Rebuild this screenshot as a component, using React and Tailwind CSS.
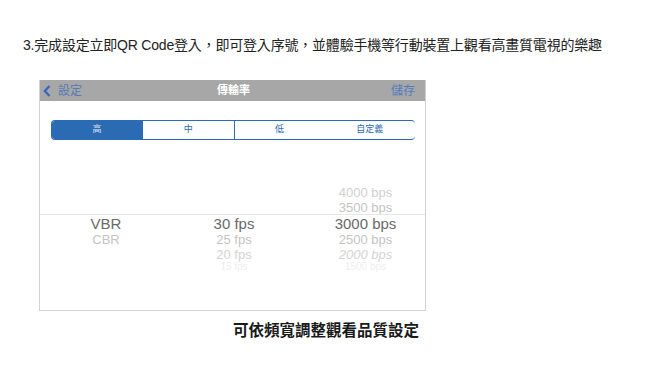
const font = { fontFamily: '"Liberation Sans", "Noto Sans CJK TC", sans-serif' };

const segments = ["高", "中", "低", "自定義"];

const pickerCols = [
  {
    x: "w-[132px] shrink-0",
    rows: [
      { t: "", c: "" },
      { t: "", c: "" },
      { t: "VBR", c: "text-[#6a6a6a] text-[15px]" },
      { t: "CBR", c: "text-[#c4c4c4] text-[13px]" },
      { t: "", c: "" },
      { t: "", c: "" },
    ],
  },
  {
    x: "w-[124px] shrink-0",
    rows: [
      { t: "", c: "" },
      { t: "", c: "" },
      { t: "30 fps", c: "text-[#6a6a6a] text-[15px]" },
      { t: "25 fps", c: "text-[#c4c4c4] text-[13px]" },
      { t: "20 fps", c: "text-[#d4d4d4] text-[13px]" },
      { t: "15 fps", c: "text-[#eeeeee] text-[10px]" },
    ],
  },
  {
    x: "flex-1 pl-[10px]",
    rows: [
      { t: "4000 bps", c: "text-[#d0d0d0] text-[13px]" },
      { t: "3500 bps", c: "text-[#c4c4c4] text-[13px]" },
      { t: "3000 bps", c: "text-[#6a6a6a] text-[15px]" },
      { t: "2500 bps", c: "text-[#c4c4c4] text-[13px]" },
      { t: "2000 bps", c: "text-[#d4d4d4] text-[13px] italic" },
      { t: "1500 bps", c: "text-[#eeeeee] text-[10px]" },
    ],
  },
];

function Picker() {
  return (
    <div className="relative mt-[45px] flex">
      <div className="absolute left-0 right-0 top-[29px] h-px bg-[#e6e6e6]" />
      {pickerCols.map((col, i) => (
        <div key={i} className={`${col.x} flex flex-col items-center`}>
          {col.rows.map((r, j) => (
            <div
              key={j}
              className={`flex items-center justify-center ${j === 2 ? "h-[17px]" : j === 5 ? "h-[10px]" : "h-[15px]"} leading-none ${r.c}`}
              style={{ fontFamily: '"Liberation Sans", sans-serif' }}
            >
              {r.t}
            </div>
          ))}
        </div>
      ))}
    </div>
  );
}

export default function App() {
  return (
    <div className="w-[650px] h-[376px] bg-white overflow-hidden" style={font}>
      <p className="pt-[36px] pl-[23px] text-[14px] leading-[18px] text-[#222] tracking-[-0.2px]">
        3.完成設定立即QR Code登入，即可登入序號，並體驗手機等行動裝置上觀看高畫質電視的樂趣
      </p>

      <div className="ml-[39px] mt-[26px] w-[387px] h-[231px] border-x border-b border-[#d2d2d2] bg-white">
        <div className="h-[21px] bg-[#a7a7a7] flex items-center px-[2px] text-[12px]">
          <div className="flex items-center w-[120px] text-[#4270bd]">
            <svg width="8" height="12" viewBox="0 0 8 12" className="ml-[1px]">
              <path d="M6.5 1 L1.8 6 L6.5 11" fill="none" stroke="#3566b8" strokeWidth="2.2" />
            </svg>
            <span className="ml-[7px] text-[12px] opacity-80">設定</span>
          </div>
          <div className="flex-1 text-center text-white text-[11px] font-bold pl-[2px]">傳輸率</div>
          <div className="w-[120px] text-right pr-[8px] text-[#4a78c2] opacity-90">儲存</div>
        </div>

        <div className="mt-[19px] ml-[11px] w-[364px] h-[20px] flex rounded-[4px] border border-[#2a6bb4] border-r-0 overflow-hidden text-[9px]">
          {segments.map((s, i) => (
            <div
              key={s}
              className={`flex-1 flex items-center justify-center ${i === 0 ? "bg-[#2a6bb4] text-white/80" : "text-[#2a6bb4]"} ${i === 1 || i === 2 ? "border-l border-[#2a6bb4]" : ""}`}
            >
              {s}
            </div>
          ))}
        </div>

        <Picker />
      </div>

      <p className="mt-[10px] ml-[233px] text-[15.5px] leading-[20px] font-bold text-[#1a1a1a]">
        可依頻寬調整觀看品質設定
      </p>
    </div>
  );
}
